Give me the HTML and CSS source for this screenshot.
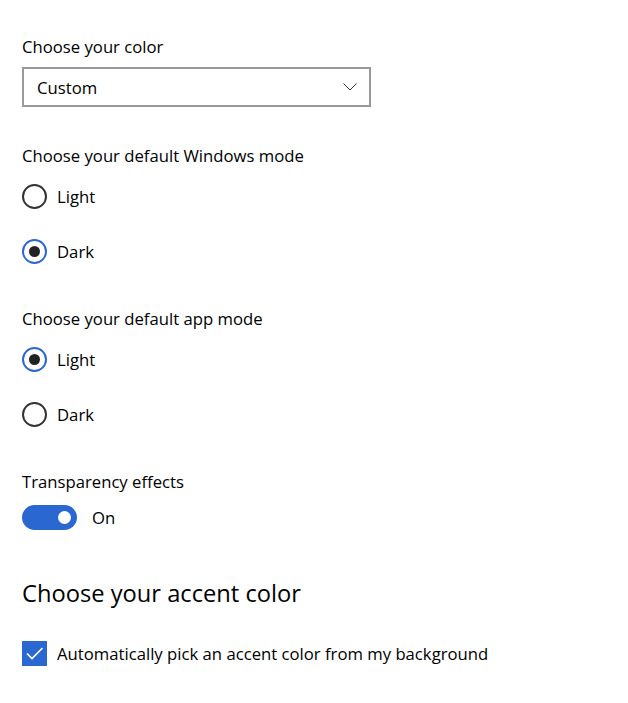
FILE: index.html
```html
<!DOCTYPE html>
<html>
<head>
<meta charset="utf-8">
<link rel="stylesheet" href="styles.css">
</head>
<body>
<div class="page">
  <div class="label first">Choose your color</div>
  <div class="select">
    <span>Custom</span>
    <svg class="chev" width="14" height="8" viewBox="0 0 14 8"><path d="M0.5 0.5 L7 7 L13.5 0.5" fill="none" stroke="#333" stroke-width="1"/></svg>
  </div>

  <div class="label group">Choose your default Windows mode</div>
  <div class="radio-row"><span class="radio"></span><span class="rtext">Light</span></div>
  <div class="radio-row"><span class="radio on"></span><span class="rtext">Dark</span></div>

  <div class="label group">Choose your default app mode</div>
  <div class="radio-row"><span class="radio on"></span><span class="rtext">Light</span></div>
  <div class="radio-row"><span class="radio"></span><span class="rtext">Dark</span></div>

  <div class="label group">Transparency effects</div>
  <div class="toggle-row"><span class="toggle"><span class="knob"></span></span><span class="ttext">On</span></div>

  <div class="heading">Choose your accent color</div>
  <div class="check-row">
    <span class="check"><svg width="25" height="25" viewBox="0 0 25 25"><path d="M5 12.5 L10 17.5 L20.5 7" fill="none" stroke="#fff" stroke-width="1.6"/></svg></span>
    <span class="ctext">Automatically pick an accent color from my background</span>
  </div>
</div>
</body>
</html>
```
FILE: styles.css
```css
html, body { margin: 0; padding: 0; background: #fff; }
body { font-family: "Open Sans", "Noto Sans", sans-serif; color: #000; font-size: 16.7px; }
.page { padding: 36px 0 0 22px; }
.label { line-height: 22px; height: 22px; }
.first { margin-bottom: 9px; }
.select {
  width: 345px; height: 36px; border: 2px solid #999; box-sizing: content-box;
  display: flex; align-items: center; justify-content: space-between;
}
.select span { padding-left: 13px; }
.chev { margin-right: 12px; }
.group { margin-top: 38px; }
.radio-row + .group { margin-top: 44px; }
.radio-row { display: flex; align-items: center; height: 25px; }
.label + .radio-row { margin-top: 17px; }
.radio-row + .radio-row { margin-top: 30px; }
.radio { width: 21px; height: 21px; border: 2px solid #333; border-radius: 50%; display: flex; align-items: center; justify-content: center; flex: none; }
.radio.on { border-color: #2b67d1; }
.radio.on::after { content: ""; width: 11px; height: 11px; border-radius: 50%; background: #222; }
.rtext { margin-left: 10px; }
.toggle-row { display: flex; align-items: center; margin-top: 12px; height: 25px; }
.toggle { width: 55px; height: 25px; border-radius: 13px; background: #2b67d1; display: flex; align-items: center; justify-content: flex-end; }
.knob { width: 13px; height: 13px; background: #fff; border-radius: 50%; margin-right: 6px; }
.ttext { margin-left: 15px; }
.heading { font-size: 23.7px; line-height: 32px; margin-top: 47px; }
.check-row { display: flex; align-items: center; margin-top: 32px; }
.check { width: 25px; height: 25px; background: #2b67d1; display: flex; flex: none; }
.ctext { margin-left: 10px; }
```
